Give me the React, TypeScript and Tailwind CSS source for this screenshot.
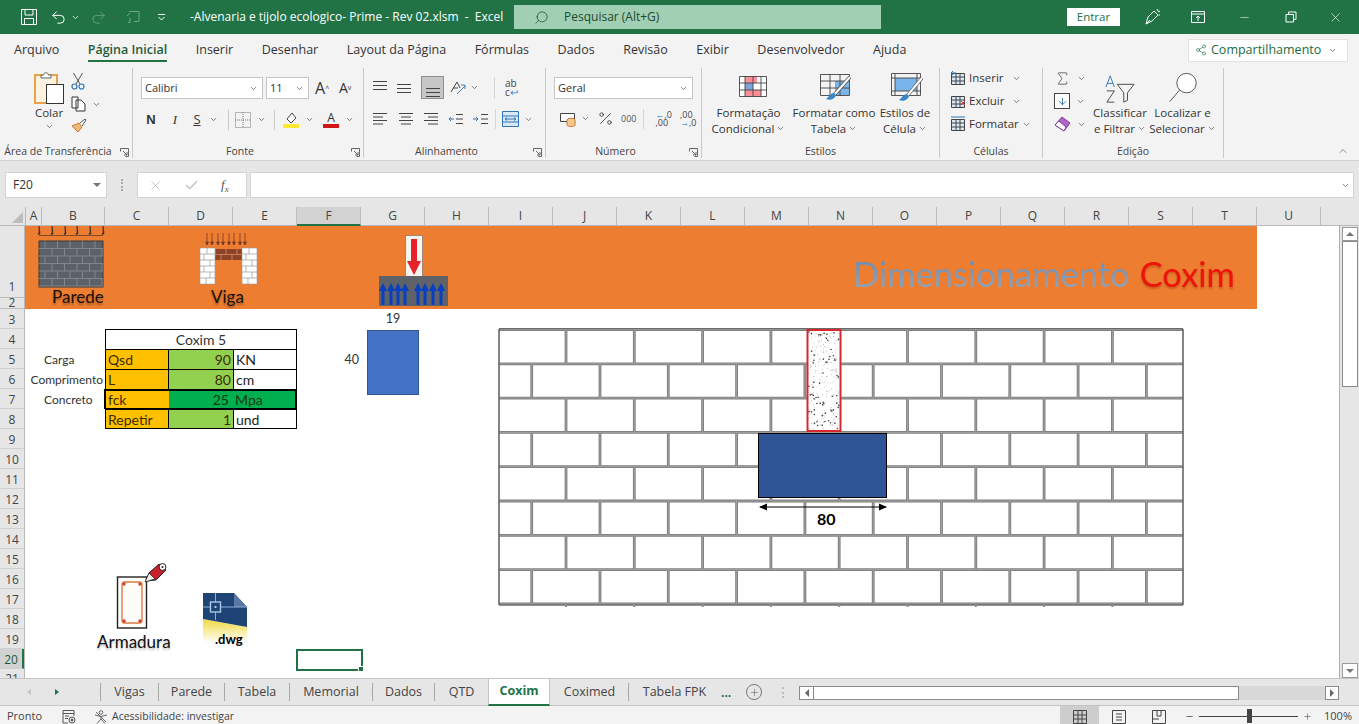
import React from 'react';
import { ChevronDown, ChevronUp, Search, X, Minus, Check, Plus, Undo2, Redo2, Percent, Sigma, ArrowDown, Share2 } from 'lucide-react';

const cols = [
  ['A', 16], ['B', 63], ['C', 64], ['D', 64], ['E', 64], ['F', 64], ['G', 64], ['H', 64], ['I', 64], ['J', 64], ['K', 64],
  ['L', 64], ['M', 64], ['N', 64], ['O', 64], ['P', 64], ['Q', 64], ['R', 64], ['S', 64], ['T', 64], ['U', 64],
] as const;

const tabs = ['Arquivo', 'Página Inicial', 'Inserir', 'Desenhar', 'Layout da Página', 'Fórmulas', 'Dados', 'Revisão', 'Exibir', 'Desenvolvedor', 'Ajuda'];

const sheets = [
  { name: 'Vigas', w: 'w-[58px]' },
  { name: 'Parede', w: 'w-[66px]' },
  { name: 'Tabela', w: 'w-[65px]' },
  { name: 'Memorial', w: 'w-[83px]' },
  { name: 'Dados', w: 'w-[62px]' },
  { name: 'QTD', w: 'w-[54px]' },
  { name: 'Coxim', w: 'w-[62px]', active: true },
  { name: 'Coximed', w: 'w-[78px]' },
  { name: 'Tabela FPK', w: 'w-[92px]' },
];

const Chev = ({ className = '' }: { className?: string }) => (
  <ChevronDown size={9} strokeWidth={2} className={`text-[#555] shrink-0 ${className}`} />
);

// launcher arrow in the corner of a ribbon group
const Launcher = () => (
  <svg width="9" height="9" viewBox="0 0 9 9" fill="none" stroke="#666" strokeWidth="1" className="absolute right-[3px] bottom-[1px]">
    <path d="M.5 3.500v-3h8v8h-3M3 3l4 4M7 4v3H4" />
  </svg>
);

const Group = ({ w, label, launcher, children }: { w: string; label: string; launcher?: boolean; children: React.ReactNode }) => (
  <div className={`relative h-[90px] shrink-0 border-r border-[#c8c8c8] flex flex-col ${w}`}>
    <div className="flex-1 min-h-0">{children}</div>
    <div className={`h-[17px] text-center text-[10.500px] leading-[21px] text-[#444] whitespace-nowrap ${launcher ? 'pr-[16px]' : ''}`}>{label}</div>
    {launcher && <Launcher />}
  </div>
);

const Combo = ({ w, text }: { w: string; text: string }) => (
  <div className={`h-[22px] bg-white border border-[#c6c6c6] flex items-center justify-between pl-[3px] pr-[4px] text-[11px] text-[#333] ${w}`}>
    <span>{text}</span>
    <Chev />
  </div>
);

// three lines of the vertical align buttons, top/middle/bottom
const VLines = ({ offset }: { offset: number }) => (
  <svg width="16" height="16" viewBox="0 0 16 16" stroke="#444" strokeWidth="1">
    <path d={`M1 ${offset + 0.5}H15M1 ${offset + 4.5}H15M1 ${offset + 8.5}H15`} />
  </svg>
);

// horizontal align buttons
const HLines = ({ d }: { d: string }) => (
  <svg width="16" height="14" viewBox="0 0 16 14" stroke="#444" strokeWidth="1">
    <path d={d} />
  </svg>
);

const Wall = () => {
  const rows = [0, 1, 2, 3, 4, 5, 6, 7];
  let lines = 'M1 276H685';
  rows.forEach((r) => {
    const top = 1.5 + r * 34.3;
    const start = r % 2 === 0 ? 68 : 33.7;
    const n = r % 2 === 0 ? 9 : 10;
    lines += `M1 ${top}H685`;
    for (let k = 0; k < n; k++) lines += `M${start + k * 68.3} ${top}V${top + 34.3}`;
  });
  const dots = [];
  for (let i = 0; i < 260; i++) {
    const a = Math.sin(i * 12.9898) * 43758.5453;
    const b = Math.sin(i * 78.233) * 24634.6345;
    const x = 311 + (a - Math.floor(a)) * 30;
    const y = 4 + (b - Math.floor(b)) * 97;
    dots.push(<circle key={i} cx={x} cy={y} r={i % 4 === 0 ? 0.8 : 0.4} fill={i % 4 === 0 ? '#3c3c3c' : '#777'} />);
  }
  return (
    <svg width="688" height="280" viewBox="0 0 688 280" className="block">
      <path d={lines} stroke="#7f7f7f" strokeWidth="2.800" fill="none" />
      <path d={lines} stroke="#a8a8a8" strokeWidth=".8" fill="none" />
      <path d="M1 1V277M685 1V277" stroke="#666" strokeWidth="1.600" />
      <path d="M1 .7H685M1 277H685" stroke="#666" strokeWidth="1" />
      {[68, 136.3, 204.6, 272.9, 341.2, 409.5, 477.8, 546.1, 614.4].map((x) => (
        <path key={x} d={`M${x} 276V279`} stroke="#8a8a8a" strokeWidth="2" />
      ))}
      <rect x="309.500" y="2" width="33" height="101" fill="#fff" stroke="#d8282e" strokeWidth="2" />
      {dots}
      <rect x="260.500" y="105.500" width="128" height="64" fill="#2f5597" stroke="#000" />
      <path d="M262 179H388" stroke="#000" strokeWidth="1" />
      <path d="M261 179l8-3.500v7zM389 179l-8-3.500v7z" fill="#000" />
    </svg>
  );
};

const ParedeIcon = () => (
  <svg width="70" height="64" viewBox="0 0 70 64">
    <g stroke="#3a2a1c" strokeWidth=".6" fill="#3a2a1c">
      <path d="M3 9.500H67" fill="none" />
      {[3, 16, 29, 41, 54, 67].map((x) => (
        <path key={x} d={`M${x} 0V9l-1-1.500h2z`} />
      ))}
    </g>
    <rect x="3" y="15" width="64" height="46" fill="#5c6068" stroke="#3b3b3b" />
    <g stroke="#8b8f96" strokeWidth=".8">
      {[0, 1, 2, 3, 4, 5].map((r) => (
        <g key={r}>
          <path d={`M3 ${22.5 + r * 7.5}H67`} />
          {[0, 1, 2, 3, 4].map((k) => (
            <path key={k} d={`M${(r % 2 ? 16 : 9) + k * 12.5} ${15 + r * 7.5}v7.500`} />
          ))}
        </g>
      ))}
    </g>
  </svg>
);

const VigaIcon = () => (
  <svg width="60" height="52" viewBox="0 0 60 52">
    <g stroke="#7a3b2a" strokeWidth=".8" fill="#7a3b2a">
      {[8, 13, 19, 24, 30, 35, 41, 46].map((x) => (
        <path key={x} d={`M${x} 0V12l-1.500-3h3l-1.500 3`} />
      ))}
    </g>
    <rect x="8" y="16" width="44" height="11" fill="#8f4326" />
    <path d="M8 21.500H52M16 16v5M27 16v5M38 16v5M22 21.500v6M33 21.500v6M44 21.500v6" stroke="#d78e66" strokeWidth=".8" />
    {[0, 42].map((x) => (
      <g key={x}>
        <rect x={x + 1} y="15" width="15" height="36" fill="#fff" stroke="#999" strokeWidth=".6" />
        <path d={`M${x + 1} 21h15M${x + 1} 27h15M${x + 1} 33h15M${x + 1} 39h15M${x + 1} 45h15M${x + 8} 15v6M${x + 5} 21v6M${x + 11} 27v6M${x + 5} 33v6M${x + 11} 39v6M${x + 7} 45v6`} stroke="#999" strokeWidth=".7" />
      </g>
    ))}
  </svg>
);

const CoximIcon = () => (
  <svg width="70" height="72" viewBox="0 0 70 72">
    <rect x="26.500" y="0.500" width="17" height="41" fill="#f7f4ee" stroke="#666" strokeWidth=".6" />
    <path d="M32 4h6v22h4l-7 14-7-14h4z" fill="#e3242b" />
    <rect x="0" y="41" width="69" height="30" fill="#5f6369" />
    {[4, 12, 19, 26, 39, 46, 54, 62].map((x) => (
      <path key={x} d={`M${x + 1.5} 70V56h2.500L${x} 48l-4 8H${x - 1.5}V70z`} fill="#0a3fc0" />
    ))}
  </svg>
);

const ArmaduraIcon = () => (
  <svg width="52" height="70" viewBox="0 0 52 70">
    <rect x="1.500" y="16" width="29" height="51" fill="#fdfcf8" stroke="#222" strokeWidth="1.400" />
    <rect x="6" y="21" width="20" height="41" rx="3" fill="none" stroke="#e49a6c" strokeWidth="1.800" />
    {[[8, 23], [24, 23], [8, 60], [24, 60]].map(([x, y]) => (
      <circle key={x + '-' + y} cx={x} cy={y} r="1.700" fill="#d83a2a" />
    ))}
    <path d="M30 20l3-8L43 3l7 6-10 10z" fill="#c8202a" stroke="#222" strokeWidth="1" />
    <circle cx="46.500" cy="6" r="3.400" fill="#fff" stroke="#222" />
    <circle cx="46.500" cy="6" r="1" fill="#222" />
    <path d="M29 21l4-9 6 6z" fill="#eee" stroke="#222" strokeWidth=".8" />
  </svg>
);

const DwgIcon = () => (
  <svg width="44" height="50" viewBox="0 0 44 50">
    <defs>
      <linearGradient id="dwgy" x1="0" y1="0" x2="0" y2="1">
        <stop offset="0" stopColor="#f3d93e" />
        <stop offset="1" stopColor="#fff" />
      </linearGradient>
    </defs>
    <path d="M0 26L44 34V50H0z" fill="url(#dwgy)" />
    <path d="M0 0H31L44 14V34L0 26z" fill="#1d4474" />
    <path d="M31 0L44 14H31z" fill="#5878a6" />
    <path d="M0 14H44M12.500 0V27" stroke="#8fb0d6" strokeWidth="1" />
    <rect x="7.500" y="9" width="10" height="10" fill="#1d4474" stroke="#a9c8ea" strokeWidth="1.400" />
    <rect x="11.500" y="13" width="2" height="2" fill="#a9c8ea" />
  </svg>
);

const Colar = () => (
  <svg width="30" height="34" viewBox="0 0 30 34">
    <rect x="1" y="4" width="22" height="28" fill="#fdf3e0" stroke="#e8a24c" strokeWidth="2" />
    <path d="M7 7V4h2.500C10 1 14 1 14.500 4H17v3z" fill="#fff" stroke="#666" />
    <rect x="12.500" y="13.500" width="17" height="19" fill="#fff" stroke="#333" />
  </svg>
);

const Cut = () => (
  <svg width="14" height="18" viewBox="0 0 14 18" fill="none">
    <path d="M2.500 1L9 12M11.500 1L5 12" stroke="#555" />
    <circle cx="3.500" cy="14.500" r="2.500" stroke="#2e75b6" strokeWidth="1.200" />
    <circle cx="10.500" cy="14.500" r="2.500" stroke="#2e75b6" strokeWidth="1.200" />
  </svg>
);

const BrushTile = ({ variant }: { variant: number }) => (
  <svg width="36" height="30" viewBox="0 0 36 30">
    {variant === 0 && (
      <g>
        <rect x="8" y="4" width="28" height="21" fill="#fff" />
        <rect x="14" y="4" width="12" height="7" fill="#ff8f96" />
        <rect x="14" y="11" width="8" height="7" fill="#7ea3d8" />
        <rect x="14" y="18" width="16" height="7" fill="#ff8f96" />
        <path d="M8.500 4.500H35.500V24.500H8.500zM14 4v21M22 4v21M30 4v21M8 11H36M8 18H36" fill="none" stroke="#444" strokeWidth=".9" />
      </g>
    )}
    {variant === 1 && (
      <g>
        <rect x="19" y="9" width="14" height="14" fill="#79b4ea" />
        <path d="M4.500 2.500H33.500V23.500H4.500zM14 2v22M24 2v22M4 9H34M4 16H34" fill="none" stroke="#444" strokeWidth=".9" />
        <path d="M34 5L18 23" stroke="#555" strokeWidth="3.400" />
        <path d="M34 5L18 23" stroke="#fff" strokeWidth="2" />
        <path d="M18 21c-4 0-5 4-8 6 4 2 9 0 10-4z" fill="#3c86c8" />
      </g>
    )}
    {variant === 2 && (
      <g>
        <rect x="8" y="6" width="22" height="13" fill="#79b4ea" />
        <path d="M4.500 1.500H33.500V23.500H4.500zM4 6H34M4 19H34M8 2v21M30 2v21" fill="none" stroke="#444" strokeWidth=".9" />
        <path d="M35 6L20 24" stroke="#555" strokeWidth="3.400" />
        <path d="M35 6L20 24" stroke="#fff" strokeWidth="2" />
        <path d="M20 22c-4 0-5 4-8 6 4 2 9 0 10-4z" fill="#3c86c8" />
      </g>
    )}
  </svg>
);

const TitleBar = () => (
  <div className="h-[34px] bg-[#217346] flex items-center text-white text-[12px] shrink-0">
    <svg width="16" height="16" viewBox="0 0 16 16" fill="none" stroke="#fff" className="ml-[21px]">
      <path d="M.5.5H15.500V15.500H.5zM4 .5V6H12V.5M3.500 15.500V9.500H12.500V15.500" />
    </svg>
    <Undo2 size={17} strokeWidth={1.400} className="ml-[13px]" />
    <Chev className="ml-[4px] text-white" />
    <Redo2 size={17} strokeWidth={1.200} className="ml-[10px] text-[#6fa588]" />
    <Chev className="ml-[3px] text-[#6fa588]" />
    <svg width="16" height="16" viewBox="0 0 16 16" fill="none" stroke="#6fa588" className="ml-[6px]">
      <path d="M4 2.500H14V12.500H9M2 7l3-3M5 9v5l-2-1" />
    </svg>
    <svg width="9" height="7" viewBox="0 0 9 7" fill="none" stroke="#fff" className="ml-[16px]">
      <path d="M1 .5H8M1.500 3l3 3 3-3" />
    </svg>
    <span className="ml-[24px] w-[324px] whitespace-nowrap text-[12px]">-Alvenaria e tijolo ecologico- Prime - Rev 02.xlsm&nbsp; -&nbsp; Excel</span>
    <div className="w-[367px] h-[24px] bg-[#a0cfb3] flex items-center text-[#1d4a30]">
      <Search size={15} strokeWidth={1.200} className="ml-[20px] -scale-x-100" />
      <span className="ml-[15px]">Pesquisar (Alt+G)</span>
    </div>
    <div className="ml-[186px] w-[53px] h-[18px] bg-white text-[#217346] text-[11.500px] flex items-center justify-center">Entrar</div>
    <svg width="18" height="18" viewBox="0 0 18 18" fill="none" stroke="#fff" className="ml-[24px]">
      <path d="M2 16l2-7 6-6 4 4-6 6zM2 16l4-4M13 1l1 2M16 3l-2 1M16 7h-1.500" />
    </svg>
    <svg width="14" height="14" viewBox="0 0 14 14" fill="none" stroke="#fff" className="ml-[29px]">
      <path d="M.5 1.500H13.500V12.500H.5zM.5 4H13.500M7 11V6M5 8l2-2 2 2" />
    </svg>
    <Minus size={13} strokeWidth={1} className="ml-[33px]" />
    <svg width="12" height="12" viewBox="0 0 12 12" fill="none" stroke="#fff" className="ml-[34px]">
      <path d="M1 3.500H8.500V11H1zM3.500 3.500V1H11V8.500H8.500" />
    </svg>
    <X size={15} strokeWidth={1} className="ml-[31px]" />
  </div>
);

const TabsRow = () => (
  <div className="h-[32px] flex items-center justify-between bg-[#f3f3f3] shrink-0">
    <div className="flex gap-[28.500px] pl-[14px] text-[12.500px] text-[#333]">
      {tabs.map((t, i) =>
        i === 1 ? (
          <div key={t} className="relative font-semibold text-[#1d5c39] whitespace-nowrap">
            {t}
            <div className="absolute left-0 right-0 -bottom-[3px] h-[2px] bg-[#217346]" />
          </div>
        ) : (
          <div key={t} className="whitespace-nowrap">{t}</div>
        ),
      )}
    </div>
    <div className="mr-[11px] w-[160px] h-[23px] bg-white border border-[#e2e2e2] flex items-center pl-[6px] text-[12.500px] text-[#1d6b3f] whitespace-nowrap">
      <Share2 size={12} strokeWidth={1.200} className="mr-[4px]" />
      <span>Compartilhamento</span>
      <Chev className="ml-[7px]" />
    </div>
  </div>
);

const Ribbon = () => (
  <div className="h-[95px] bg-[#f3f3f3] border-b border-[#d2d2d2] flex pt-[2px] shrink-0 relative text-[#333]">
    <Group w="w-[133px]" label="Área de Transferência" launcher>
      <div className="flex pl-[34px] pt-[3px]">
        <div className="flex flex-col items-center w-[30px] text-[11.500px]">
          <Colar />
          <span className="mt-[1px] leading-[14px]">Colar</span>
          <Chev className="mt-[2px]" />
        </div>
        <div className="flex flex-col ml-[7px] pt-[1px] gap-[6px]">
          <Cut />
          <div className="flex items-center gap-[6px]">
            <svg width="15" height="16" viewBox="0 0 15 16" fill="#fff" stroke="#333">
              <path d="M1 1H7V12H1zM5 4H10L14 8V15H5z" />
            </svg>
            <Chev />
          </div>
          <svg width="16" height="15" viewBox="0 0 16 15">
            <path d="M1 8L8 5l3 4-4 5z" fill="#f0b878" stroke="#c8793a" />
            <path d="M9 5l5-4 1 1-4 6" fill="#fff" stroke="#555" />
          </svg>
        </div>
      </div>
    </Group>

    <Group w="w-[231px]" label="Fonte" launcher>
      <div className="pl-[8px] pt-[9px] flex items-center">
        <Combo w="w-[122px]" text="Calibri" />
        <div className="w-[3px]" />
        <Combo w="w-[43px]" text="11" />
        <span className="ml-[6px] w-[20px] text-[16px] leading-none whitespace-nowrap">A<sup className="text-[7px]">^</sup></span>
        <span className="ml-[4px] text-[14px] leading-none whitespace-nowrap">A<sup className="text-[7px]">v</sup></span>
      </div>
      <div className="pl-[12px] pt-[9px] flex items-center h-[32px] text-[13px]">
        <span className="w-[12px] font-bold text-center font-['Liberation_Sans']">N</span>
        <span className="ml-[12px] w-[12px] italic text-center font-['Liberation_Serif']">I</span>
        <span className="ml-[10px] w-[12px] underline text-center">S</span>
        <Chev className="ml-[6px]" />
        <div className="ml-[10px] w-px h-[20px] bg-[#c8c8c8]" />
        <svg width="16" height="16" viewBox="0 0 16 16" fill="none" stroke="#777" strokeDasharray="1 1" className="ml-[6px]">
          <path d="M.5.5H15.500V15.500H.5zM8 0V16M0 8H16" />
        </svg>
        <Chev className="ml-[6px]" />
        <div className="ml-[8px] w-px h-[20px] bg-[#c8c8c8]" />
        <svg width="16" height="17" viewBox="0 0 16 17" className="ml-[8px]">
          <path d="M4 8l5-6 4 5-5 5z" fill="#fff" stroke="#444" />
          <rect x="0" y="13" width="16" height="4" fill="#ffe933" />
        </svg>
        <Chev className="ml-[6px]" />
        <span className="ml-[9px] relative w-[16px] h-[17px] text-center text-[12px] leading-[13px]">
          A
          <span className="absolute left-0 bottom-0 w-full h-[4px] bg-[#d01818]" />
        </span>
        <Chev className="ml-[6px]" />
      </div>
    </Group>

    <Group w="w-[182px]" label="Alinhamento" launcher>
      <div className="pl-[4px] pt-[8px] flex items-center h-[31px]">
        <div className="w-[24px] flex justify-center"><VLines offset={1} /></div>
        <div className="w-[24px] flex justify-center"><VLines offset={4} /></div>
        <div className="w-[23px] h-[23px] ml-[5px] bg-[#c6c6c6] border border-[#8e8e8e] flex items-end justify-center"><VLines offset={6} /></div>
        <svg width="18" height="16" viewBox="0 0 18 16" fill="none" stroke="#444" className="ml-[5px]">
          <path d="M2 12L8 2l3 6M4 8h5" />
          <path d="M8 14L16 6M12 5h4v4" stroke="#3b82c4" />
        </svg>
        <Chev className="ml-[3px]" />
        <div className="ml-[15px] w-px h-[22px] bg-[#d4d4d4]" />
        <span className="ml-[10px] text-[10px] leading-[9px] text-[#444] whitespace-nowrap">ab<br />c<span className="text-[#3b82c4]">↩</span></span>
      </div>
      <div className="pl-[4px] pt-[10px] flex items-center text-[#444]">
        <div className="w-[24px] flex justify-center"><HLines d="M1 1.500H15M1 5H11M1 8.500H15M1 12H11" /></div>
        <div className="w-[27px] flex justify-center"><HLines d="M1 1.500H15M3 5H13M1 8.500H15M3 12H13" /></div>
        <div className="w-[24px] flex justify-center"><HLines d="M1 1.500H15M5 5H15M1 8.500H15M5 12H15" /></div>
        {[0, 1].map((k) => (
          <svg key={k} width="16" height="14" viewBox="0 0 16 14" fill="none" stroke="#444" className={k ? 'ml-[8px]' : 'ml-[5px]'}>
            <path d={k ? 'M9 2.500H16M9 7H16M9 11.500H16' : 'M8 2.500H15M8 7H15M8 11.500H15'} />
            <path d={k ? 'M1 7H6M4 5l2 2-2 2' : 'M1 7H6M3 5L1 7l2 2'} stroke="#2e75b6" />
          </svg>
        ))}
        <div className="ml-[7px] w-px h-[20px] bg-[#d4d4d4]" />
        <svg width="17" height="16" viewBox="0 0 17 16" fill="#dbe9f6" stroke="#2e75b6" className="ml-[6px]">
          <path d="M.5.5H16.500V15.500H.5zM.5 5H16.500M.5 11H16.500" />
          <path d="M3 8H14M5 6.500L3 8l2 1.500M12 6.500L14 8l-2 1.500" fill="none" />
        </svg>
        <Chev className="ml-[5px]" />
      </div>
    </Group>

    <Group w="w-[156px]" label="Número" launcher>
      <div className="pl-[8px] pt-[9px]"><Combo w="w-[139px]" text="Geral" /></div>
      <div className="pl-[14px] pt-[9px] flex items-center h-[30px]">
        <svg width="16" height="16" viewBox="0 0 16 16" fill="none" stroke="#444" className="shrink-0">
          <path d="M.5 2.500H14.500V10.500H.5z" fill="#fff" />
          <ellipse cx="11" cy="9" rx="4" ry="1.800" fill="#f4c98a" stroke="#c8793a" />
          <path d="M7 9v5c0 2 8 2 8 0V9" fill="#f4c98a" stroke="#c8793a" />
        </svg>
        <Chev className="ml-[5px]" />
        <Percent size={17} strokeWidth={1.300} className="ml-[7px] text-[#444]" />
        <span className="ml-[7px] text-[9px] text-[#555]">000</span>
        <div className="ml-[7px] w-px h-[20px] bg-[#d4d4d4]" />
        <span className="ml-[11px] text-[9px] leading-[8px] text-[#444] whitespace-nowrap"><span className="text-[#2e75b6]">←</span>,0<br />,00</span>
        <span className="ml-[8px] text-[9px] leading-[8px] text-[#444] whitespace-nowrap">,00<br /><span className="text-[#2e75b6]">→</span>,0</span>
      </div>
    </Group>

    <Group w="w-[238px]" label="Estilos">
      <div className="flex pt-[4px] text-[11.500px] leading-[15.500px] text-center">
        <div className="w-[87px] ml-[3px] flex flex-col items-center">
          <BrushTile variant={0} />
          <span className="mt-[3px] whitespace-nowrap">Formatação</span>
          <span className="flex items-center gap-[2px] whitespace-nowrap">Condicional <Chev /></span>
        </div>
        <div className="w-[84px] flex flex-col items-center">
          <BrushTile variant={1} />
          <span className="mt-[3px] whitespace-nowrap">Formatar como</span>
          <span className="flex items-center gap-[2px] whitespace-nowrap">Tabela <Chev /></span>
        </div>
        <div className="w-[58px] flex flex-col items-center">
          <BrushTile variant={2} />
          <span className="mt-[3px] whitespace-nowrap">Estilos de</span>
          <span className="flex items-center gap-[2px] whitespace-nowrap">Célula <Chev /></span>
        </div>
      </div>
    </Group>

    <Group w="w-[103px]" label="Células">
      <div className="flex flex-col pl-[10px] pt-[2px] text-[11.500px] gap-[7px]">
        {[
          ['Inserir', 'M6 3H1M3 1L1 3l2 2', 'ml-[8px]'],
          ['Excluir', 'M11 8l4 4M15 8l-4 4', 'ml-[8px]'],
          ['Formatar', 'M1 1H15', 'ml-[3px]'],
        ].map(([t, d, m]) => (
          <div key={t} className="flex items-center h-[16px] whitespace-nowrap">
            <svg width="16" height="16" viewBox="0 0 16 16" fill="#dbe9f6" stroke="#444" className="mr-[3px] shrink-0">
              <path d="M1.500 3.500H14.500V14.500H1.500zM1.500 7H14.500M1.500 11H14.500M6 3.500V14.500M10 3.500V14.500" />
              <path d={d} fill="none" stroke={t === 'Excluir' ? '#d83a2a' : '#2e75b6'} />
            </svg>
            {t}
            <Chev className={m} />
          </div>
        ))}
      </div>
    </Group>

    <Group w="w-[181px]" label="Edição">
      <div className="flex pt-[2px]">
        <div className="flex flex-col pl-[11px] gap-[7px] w-[47px]">
          <div className="flex items-center gap-[6px] h-[16px]"><Sigma size={17} strokeWidth={1} /><Chev /></div>
          <div className="flex items-center gap-[6px] h-[16px]">
            <div className="w-[16px] h-[16px] border border-[#444] bg-white flex items-center justify-center"><ArrowDown size={11} className="text-[#2e75b6]" /></div>
            <Chev />
          </div>
          <div className="flex items-center gap-[6px] h-[16px]">
            <svg width="17" height="16" viewBox="0 0 17 16"><path d="M1 9l7-8 8 6-6 8z" fill="#b264c8" stroke="#7a3f90" /><path d="M1 9l4-4 7 6-2 4z" fill="#fff" stroke="#7a3f90" /></svg>
            <Chev />
          </div>
        </div>
        <div className="w-[60px] flex flex-col items-center text-[11.500px] leading-[15.500px]">
          <svg width="32" height="30" viewBox="0 0 34 32" fill="none" className="mt-[4px]">
            <path d="M2 14L6.500 2 11 14M3.500 10H9.500" stroke="#2e75b6" />
            <path d="M3 18H11L3 30H11" stroke="#444" />
            <path d="M14 11H32L25 20V28L21 30V20z" stroke="#444" />
          </svg>
          <span className="whitespace-nowrap mt-[1px]">Classificar</span>
          <span className="flex items-center gap-[2px] whitespace-nowrap">e Filtrar <Chev /></span>
        </div>
        <div className="w-[65px] flex flex-col items-center text-[11.500px] leading-[15.500px]">
          <svg width="30" height="31" viewBox="0 0 34 34" fill="none" stroke="#444" className="mt-[2px] mb-[2px]">
            <circle cx="21" cy="12" r="11" fill="#fff" />
            <path d="M13 20L2 33" />
          </svg>
          <span className="whitespace-nowrap">Localizar e</span>
          <span className="flex items-center gap-[2px] whitespace-nowrap">Selecionar <Chev /></span>
        </div>
      </div>
    </Group>
    <ChevronUp size={12} strokeWidth={1.300} className="absolute right-[10px] bottom-[3px] text-[#555]" />
  </div>
);

const FormulaBar = () => (
  <div className="h-[46px] bg-[#e6e6e6] flex items-start pt-[11px] pl-[5px] shrink-0 text-[#333]">
    <div className="w-[102px] h-[26px] bg-white border border-[#d4d4d4] flex items-center justify-between pl-[7px] pr-[5px] text-[12px]">
      F20
      <span className="w-0 h-0 border-x-[4px] border-x-transparent border-t-[4px] border-t-[#777]" />
    </div>
    <span className="ml-[14px] mt-[7px] w-[2px] h-[12px] border-l-2 border-dotted border-[#aaa]" />
    <div className="ml-[14px] w-[110px] h-[26px] bg-white border border-[#d4d4d4] flex items-center">
      <X size={15} strokeWidth={1.300} className="ml-[10px] text-[#bbb]" />
      <Check size={15} strokeWidth={2} className="ml-[21px] text-[#bbb]" />
      <span className="ml-[22px] italic font-['Liberation_Serif'] text-[13px] text-[#555]">f<sub className="text-[9px]">x</sub></span>
    </div>
    <div className="ml-[3px] w-[1104px] h-[26px] bg-white border border-[#d4d4d4] flex items-center justify-end pr-[3px]">
      <Chev />
    </div>
  </div>
);

const ColumnHeaders = () => (
  <div className="h-[19px] flex bg-[#e6e6e6] shrink-0 overflow-hidden">
    <div className="w-[26px] h-[19px] shrink-0 border-r border-b border-[#b8b8b8] flex items-end justify-end p-[2px]">
      <span className="w-0 h-0 border-l-[11px] border-l-transparent border-b-[11px] border-b-[#bcbcbc]" />
    </div>
    {cols.map(([c, w]) => (
      <div
        key={c}
        style={{ width: w }}
        className={`shrink-0 border-r border-[#bdbdbd] text-center text-[12px] leading-[17px] text-[#444] ${c === 'F' ? 'bg-[#d2d2d2] border-b-2 border-b-[#217346] text-[#1d5c39]' : 'border-b border-b-[#b8b8b8]'}`}
      >
        {c}
      </div>
    ))}
    <div className="flex-1 border-b border-[#b8b8b8]" />
  </div>
);

const RowHeaders = () => {
  const rows = [3, 4, 5, 6, 7, 8, 9, 10, 11, 12, 13, 14, 15, 16, 17, 18, 19, 20];
  return (
    <div className="w-[25px] shrink-0 bg-[#e6e6e6] border-r border-[#b8b8b8] overflow-hidden text-[12px] text-[#444] text-center">
      <div className="h-[72px] border-b border-[#bdbdbd] flex items-end justify-center pb-[1px]">1</div>
      <div className="h-[11px] border-b border-[#bdbdbd] leading-[9px] overflow-hidden">2</div>
      {rows.map((r) => (
        <div key={r} className={`h-[20px] leading-[22px] border-b border-[#d0d0d0] ${r === 20 ? 'bg-[#d2d2d2] border-r-2 border-r-[#217346] text-[#1d5c39]' : ''}`}>{r}</div>
      ))}
      <div className="h-[10px] leading-[20px]">21</div>
    </div>
  );
};

const tableCell = 'border border-black flex items-center px-[2px] text-[14px] text-[#3a2d00]';

const Sheet = () => (
  <div className="relative flex-1 min-w-0 bg-white overflow-hidden font-['Lato',sans-serif] text-[#333]">
    {/* banner row 1-2 */}
    <div className="relative w-[1232px] h-[83px] bg-[#ed7d31]">
      <div className="absolute left-[11px] top-0"><ParedeIcon /></div>
      <span className="absolute left-[27px] top-[58px] text-[17px] text-[#1c1108] [text-shadow:0_2px_2px_rgba(0,0,0,0.3)]">Parede</span>
      <div className="absolute left-[174px] top-[7px]"><VigaIcon /></div>
      <span className="absolute left-[186px] top-[58px] text-[17px] text-[#1c1108] [text-shadow:0_2px_2px_rgba(0,0,0,0.3)]">Viga</span>
      <div className="absolute left-[354px] top-[9px]"><CoximIcon /></div>
      <div className="absolute left-[828px] top-[26px] flex gap-[10px] text-[34.500px] leading-[44px] whitespace-nowrap">
        <span className="bg-gradient-to-b from-[#5f87b8] to-[#a0a8b0] bg-clip-text text-transparent">Dimensionamento</span>
        <span className="text-[#ee1208] [text-shadow:0_2px_2px_rgba(120,30,0,0.3)]">Coxim</span>
      </div>
    </div>

    {/* cells from row 3: col A+B, then C..G */}
    <div className="grid grid-cols-[80px_64px_64px_64px_64px_64px] grid-rows-[repeat(6,20px)] text-[13px]">
      <div className="col-start-6 row-start-1 text-center leading-[20px] text-[12.500px]">19</div>
      <div className="col-start-2 col-span-3 row-start-2 border border-black border-b-0 flex items-center justify-center text-[14px]">Coxim 5</div>

      <div className="col-start-1 row-start-3 text-[12px] leading-[22px] pl-[19px]">Carga</div>
      <div className={`col-start-2 row-start-3 bg-[#ffc000] ${tableCell} border-b-0`}>Qsd</div>
      <div className={`col-start-3 row-start-3 bg-[#92d050] justify-end ${tableCell} border-x-0 border-b-0`}>90</div>
      <div className={`col-start-4 row-start-3 ${tableCell} border-b-0 text-[#222]`}>KN</div>
      <div className="col-start-5 row-start-3 text-right pr-[2px] leading-[22px] text-[12.500px]">40</div>

      <div className="col-start-1 row-start-4 text-right text-[12px] leading-[22px] pr-[2px]">Comprimento</div>
      <div className={`col-start-2 row-start-4 bg-[#ffc000] ${tableCell} border-b-0`}>L</div>
      <div className={`col-start-3 row-start-4 bg-[#92d050] justify-end ${tableCell} border-x-0 border-b-0`}>80</div>
      <div className={`col-start-4 row-start-4 ${tableCell} border-b-0 text-[#222]`}>cm</div>

      <div className="col-start-1 row-start-5 text-[12px] leading-[22px] pl-[19px]">Concreto</div>
      <div className="col-start-2 col-span-3 row-start-5 grid grid-cols-3 border-2 border-black -ml-[1px] z-10 text-[14px] text-[#143a12]">
        <div className="bg-[#ffc000] pl-[2px] leading-[17px] text-[#3a2d00]">fck</div>
        <div className="bg-[#00b050] text-right pr-[3px] leading-[17px]">25</div>
        <div className="bg-[#00b050] pl-[3px] leading-[17px]">Mpa</div>
      </div>

      <div className={`col-start-2 row-start-6 bg-[#ffc000] ${tableCell}`}>Repetir</div>
      <div className={`col-start-3 row-start-6 bg-[#92d050] justify-end ${tableCell} border-x-0`}>1</div>
      <div className={`col-start-4 row-start-6 ${tableCell} text-[#222]`}>und</div>
    </div>

    {/* floating shapes on the sheet */}
    <div className="absolute left-[342px] top-[104px] w-[52px] h-[65px] bg-[#4472c4] border border-[#2f5597]" />
    <div className="absolute left-[473px] top-[102px]"><Wall /></div>
    <span className="absolute left-[792px] top-[283px] text-[16px] leading-[20px] font-bold text-black">80</span>
    <div className="absolute left-[91px] top-[335px]"><ArmaduraIcon /></div>
    <span className="absolute left-[72px] top-[405px] text-[17px] leading-[22px] text-[#111] [text-shadow:0_2px_2px_rgba(0,0,0,0.25)]">Armadura</span>
    <div className="absolute left-[178px] top-[367px]"><DwgIcon /></div>
    <span className="absolute left-[190px] top-[406px] text-[13px] leading-[15px] font-bold text-black">.dwg</span>

    {/* selected cell F20 */}
    <div className="absolute left-[271px] top-[423px] w-[67px] h-[22px] border-2 border-[#217346]">
      <span className="absolute -right-[3px] -bottom-[3px] w-[6px] h-[6px] bg-[#217346] border border-white" />
    </div>
  </div>
);

const VScroll = () => (
  <div className="w-[20px] shrink-0 bg-[#e6e6e6] border-l border-[#b0b0b0] pl-[2px] pt-px pr-[1px] flex flex-col">
    <div className="h-[14px] bg-white border border-[#9a9a9a] flex items-center justify-center shrink-0">
      <span className="w-0 h-0 border-x-[4px] border-x-transparent border-b-[4px] border-b-[#777]" />
    </div>
    <div className="h-[146px] bg-white border border-[#8a8a8a] shrink-0" />
    <div className="flex-1" />
    <div className="h-[15px] bg-white border border-[#9a9a9a] flex items-center justify-center shrink-0">
      <span className="w-0 h-0 border-x-[4px] border-x-transparent border-t-[4px] border-t-[#777]" />
    </div>
  </div>
);

const SheetTabs = () => (
  <div className="h-[28px] bg-[#e6e6e6] border-y border-[#c4c4c4] flex items-stretch text-[12.500px] text-[#444] shrink-0 relative">
    <div className="w-[100px] flex items-center pl-[27px] gap-[24px]">
      <span className="w-0 h-0 border-y-[3.500px] border-y-transparent border-r-[4px] border-r-[#c4c4c4]" />
      <span className="w-0 h-0 border-y-[3.500px] border-y-transparent border-l-[4px] border-l-[#217346]" />
    </div>
    {sheets.map((s) =>
      s.active ? (
        <div key={s.name} className={`${s.w} -mt-px -mb-px bg-white border-x border-t border-[#c4c4c4] border-b-2 border-b-[#217346] flex items-center justify-center font-bold text-[#217346]`}>
          {s.name}
        </div>
      ) : (
        <div key={s.name} className={`${s.w} flex items-center justify-center my-[4px] whitespace-nowrap border-l border-[#a8a8a8] ${s.name === 'Coximed' ? 'border-l-transparent' : ''}`}>
          {s.name}
        </div>
      ),
    )}
    <span className="absolute left-[721px] top-[8px] text-[12px] leading-[12px] font-bold text-[#217346]">...</span>
    <div className="absolute left-[746px] top-[5px] w-[16px] h-[16px] rounded-full border border-[#777] flex items-center justify-center">
      <Plus size={11} strokeWidth={1.300} className="text-[#666]" />
    </div>
    <span className="absolute left-[782px] top-[8px] h-[11px] border-l-2 border-dotted border-[#bbb]" />
    {/* horizontal scrollbar */}
    <div className="absolute left-[799px] top-[7px] w-[540px] h-[14px] bg-[#d8d8d8] flex">
      <div className="w-[15px] bg-white border border-[#8a8a8a] flex items-center justify-center shrink-0">
        <span className="w-0 h-0 border-y-[4px] border-y-transparent border-r-[4px] border-r-[#666]" />
      </div>
      <div className="w-[425px] bg-white border-y border-r border-[#8a8a8a] shrink-0" />
      <div className="flex-1" />
      <div className="w-[14px] bg-white border border-[#8a8a8a] flex items-center justify-center shrink-0">
        <span className="w-0 h-0 border-y-[4px] border-y-transparent border-l-[4px] border-l-[#666]" />
      </div>
    </div>
  </div>
);

const StatusBar = () => (
  <div className="h-[18px] bg-[#f3f3f3] flex items-center pt-[3px] text-[11px] text-[#444] shrink-0">
    <span className="ml-[7px]">Pronto</span>
    <svg width="14" height="14" viewBox="0 0 14 14" fill="none" stroke="#555" className="ml-[20px]">
      <path d="M1 .5H12V6M1 .5V13H6M1 3.500H12M3 6H7M3 8.500H6" />
      <circle cx="10" cy="10" r="3" />
      <circle cx="10" cy="10" r="1" fill="#555" />
    </svg>
    <svg width="14" height="14" viewBox="0 0 14 14" fill="none" stroke="#666" className="ml-[18px]">
      <circle cx="7" cy="2.500" r="1.800" />
      <path d="M1 5l6 1.500L13 5M7 6.500V9M3 13.500L7 9l4 4.500M2 2l10 10" />
    </svg>
    <span className="ml-[4px] whitespace-nowrap text-[10.500px]">Acessibilidade: investigar</span>
    <div className="ml-auto -mt-[3px] self-start h-[18px] w-[39px] bg-[#cdcdcd] flex items-center justify-center pt-[3px]">
      <svg width="14" height="14" viewBox="0 0 14 14" fill="none" stroke="#444"><path d="M.5.5H13.500V13.500H.5zM.5 5H13.500M.5 9H13.500M5 .5V13.500M9 .5V13.500" /></svg>
    </div>
    <svg width="14" height="14" viewBox="0 0 14 14" fill="none" stroke="#444" className="ml-[13px]"><path d="M.5.5H13.500V13.500H.5zM4 4H10M4 7H10M4 10H10" /></svg>
    <svg width="14" height="14" viewBox="0 0 14 14" fill="none" stroke="#444" className="ml-[26px]"><path d="M.5.5H13.500V13.500H.5zM5 .5V6H9V.5M.5 9H7" /></svg>
    <Minus size={9} strokeWidth={2} className="ml-[19px]" />
    <div className="ml-[5px] w-[99px] h-px bg-[#444] relative">
      <span className="absolute left-[48px] -top-[7px] w-[5px] h-[14px] bg-[#444]" />
    </div>
    <Plus size={9} strokeWidth={1.500} className="ml-[5px]" />
    <span className="ml-[12px] mr-[7px]">100%</span>
  </div>
);

export default function App() {
  return (
    <div className="w-[1359px] h-[724px] overflow-hidden flex flex-col bg-[#e6e6e6] font-['Open_Sans',sans-serif]">
      <TitleBar />
      <TabsRow />
      <Ribbon />
      <FormulaBar />
      <div className="flex-1 min-h-0 flex flex-col">
        <ColumnHeaders />
        <div className="flex-1 min-h-0 flex">
          <RowHeaders />
          <Sheet />
          <VScroll />
        </div>
      </div>
      <SheetTabs />
      <StatusBar />
    </div>
  );
}
